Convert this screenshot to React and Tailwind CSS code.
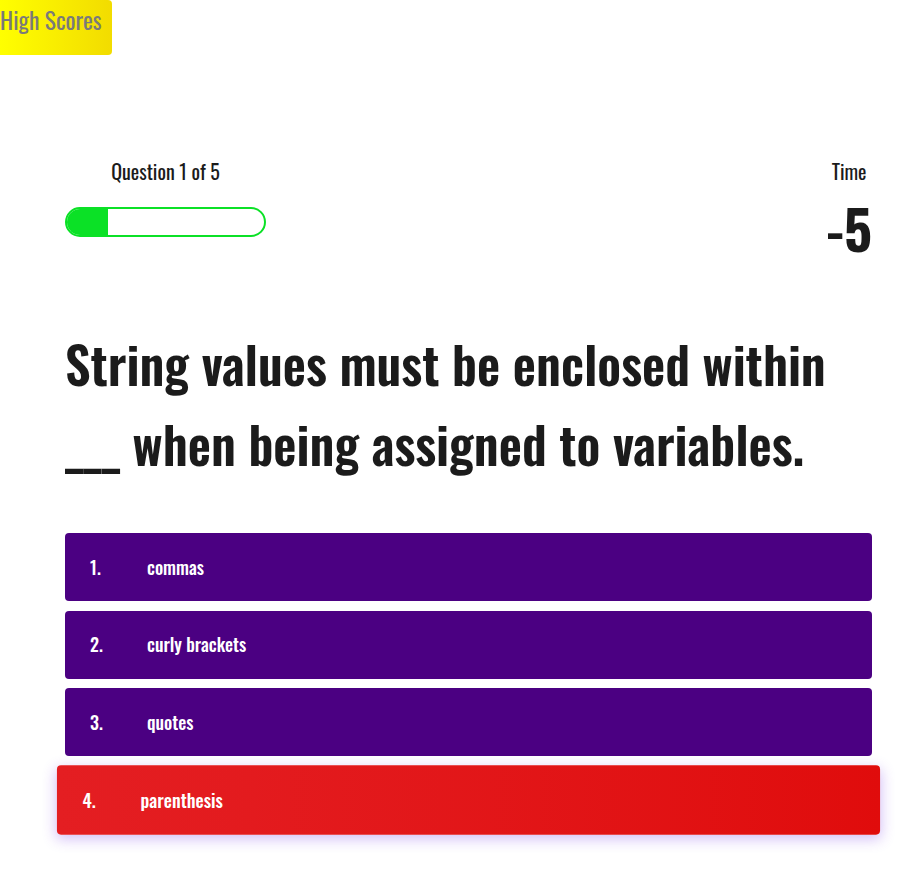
const answers = [
  { n: '1.', text: 'commas' },
  { n: '2.', text: 'curly brackets' },
  { n: '3.', text: 'quotes' },
  { n: '4.', text: 'parenthesis', hover: true },
]

export default function App() {
  return (
    <div className="min-h-[877px] bg-white text-[#1b1b1b] font-['Oswald','Roboto_Condensed',sans-serif]">
      <button className="flex h-[55px] w-[112px] items-start whitespace-nowrap rounded-br-[4px] rounded-tr-[4px] bg-gradient-to-r from-[#ffff00] to-[#f2dc00] text-left text-[23.5px] leading-[40px] text-[#7a7a7a]">
        High Scores
      </button>

      <div className="ml-[65px] w-[807px]">
        <div className="mt-[100px] flex items-start justify-between">
          <div className="flex w-[201px] flex-col items-center">
            <p className="text-[20px] leading-[32px]">Question 1 of 5</p>
            <div className="mt-[20px] h-[30px] w-[201px] overflow-hidden rounded-full border-2 border-[#0be126]">
              <div className="h-full w-[41px] bg-[#0be126]" />
            </div>
          </div>
          <div className="flex flex-col items-center">
            <p className="text-[20px] leading-[32px]">Time</p>
            <p className="mt-[9px] text-[55px] font-bold leading-[62px]">-5</p>
          </div>
        </div>

        <h1 className="mt-[66px] text-[50.5px] font-semibold leading-[80px]">
          String values must be enclosed within ___ when being assigned to variables.
        </h1>

        <ul className="mt-[49px] flex flex-col gap-[9.5px]">
          {answers.map(a => (
            <li
              key={a.n}
              className={`flex h-[68px] items-center rounded-[4px] pl-[25px] text-[18px] font-medium text-white ${
                a.hover
                  ? 'scale-[1.02] bg-gradient-to-r from-[#e41e22] to-[#e00c0c] shadow-[0_4px_14px_rgba(110,40,230,0.3)]'
                  : 'bg-[#4b0082]'
              }`}
            >
              <span className="w-[57px]">{a.n}</span>
              <span>{a.text}</span>
            </li>
          ))}
        </ul>
      </div>
    </div>
  )
}
